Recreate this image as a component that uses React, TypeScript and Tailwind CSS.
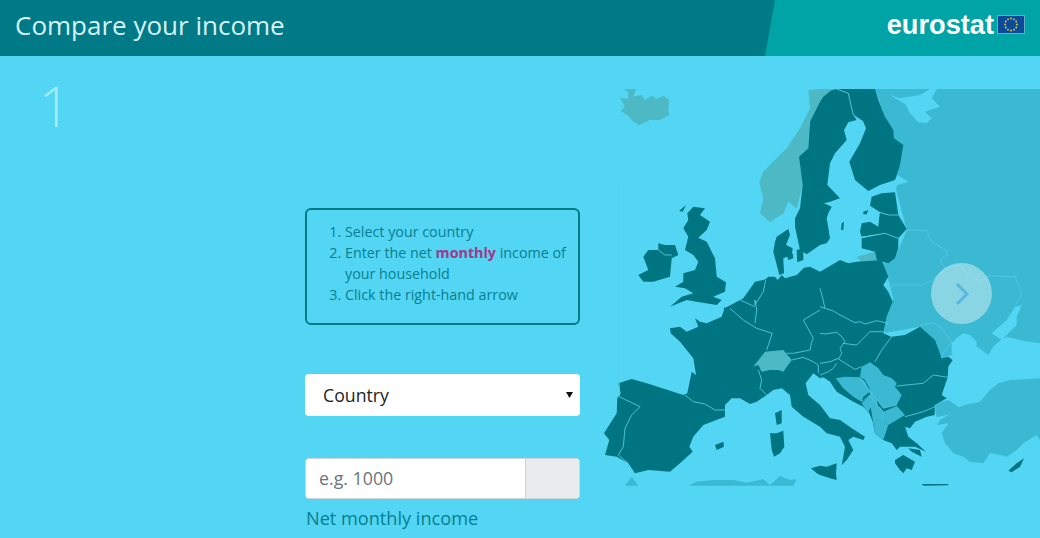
const OFFSETS: Record<string, [number, number]> = {
  a: [600, 85],
  b: [820, 85],
  c: [600, 300],
  d: [820, 300],
};

// Points are noted per map quadrant, at three times the page scale.
function pts(spec: string) {
  let off: [number, number] = OFFSETS.a;
  const out: string[] = [];
  for (const tok of spec.trim().split(/\s+/)) {
    if (OFFSETS[tok]) {
      off = OFFSETS[tok];
      continue;
    }
    const [x, y] = tok.split(",").map(Number);
    out.push(`${(x / 3 + off[0]).toFixed(1)},${(y / 3 + off[1]).toFixed(1)}`);
  }
  return out.join(" ");
}

const BG = "#53d5f4";
const DARK = "#007582";
const EAST = "#3bb9d3";
const EFTA = "#4cb9c4";
const LINE = "#5fd0ea";

const east = [
  "b 165,12 690,12 690,675 d 660,130 610,122 560,110 535,125 520,140 505,165 485,150 470,140 470,125 450,105 430,100 410,115 395,130 395,165 365,175 300,80 190,100 200,50 220,0 b 205,580 190,535 225,520 260,435 225,300 222,160 195,95",
  "d 660,235 620,238 570,240 535,250 510,270 480,305 445,312 420,320 385,345 360,360 352,375 385,370 365,400 375,430 400,460 430,470 450,485 490,490 510,460 540,465 560,470 590,450 610,430 650,405 660,420 680,440 680,235",
  "d 345,315 365,305 385,300 415,320 445,325 400,340 350,352 345,330",
  "c 75,557 95,530 115,557",
  "c 265,557 290,545 340,540 400,540 440,548 490,538 510,555 540,528 570,540 590,538 580,557",
];

const seas = [
  "b 210,30 240,40 300,30 330,12 350,12 335,40 360,65 330,75 315,80 335,100 320,115 295,112 270,85 258,60 235,45",
  "b 145,318 180,300 225,285 232,270 265,290 232,300 225,322 185,325 155,335",
  "d 515,100 560,60 585,20 605,15 590,50 590,75 545,120",
];

const efta = [
  "a 70,12 108,13 100,35 125,30 135,45 155,32 170,42 190,32 208,45 205,75 208,90 180,105 150,105 118,120 100,110 85,92 62,78 75,65 60,38 85,42 85,22",
  "a 625,15 660,12 695,12 695,40 660,50 628,115 625,190 597,215 608,300 590,370 565,350 550,385 510,412 480,385 490,340 478,290 490,260 520,230 560,190 600,130 630,70",
  "c 460,200 495,155 550,150 575,180 550,215 535,210 510,210 485,215 475,195",
  "b 110,515 165,500 170,525 125,530",
];

const dark = [
  // Sweden and Finland
  "b -30,110 0,50 10,35 35,15 50,12 85,25 100,90 110,105 85,112 72,135 80,165 45,205 30,235 22,300 60,340 30,350 12,355 35,365 25,385 20,400 30,460 20,475 0,480 -40,508 -60,495 -75,425 -75,400 -60,370 -52,300 -63,215 -35,190",
  "b 50,12 165,12 175,45 195,95 220,135 222,160 250,180 240,240 225,285 180,300 145,318 105,285 88,230 120,175 138,130 130,110 100,90 85,25",
  // Baltic states
  "b 155,335 185,325 225,322 235,390 205,390 178,380 150,362",
  "b 120,440 125,415 150,410 175,425 178,395 180,382 205,390 235,390 260,432 235,460 195,445 125,455",
  "b 125,460 195,445 235,460 235,490 225,520 205,535 170,525 165,500 125,490",
  "b 130,380 145,375 140,388 130,388",
  "b 65,415 72,410 70,435 63,435",
  // Mainland
  "a 368,672 392,660 430,640 465,590 497,583 505,575 525,575 533,585 545,570 555,580 590,570 612,548 630,545 660,560 b 0,560 35,540 60,525 85,535 110,530 185,525 205,575 190,600 205,620 220,655 d 220,0 200,50 190,100 215,110 255,105 300,80 345,120 365,175 385,170 398,180 385,200 383,232 365,285 380,295 345,315 345,345 320,350 285,365 270,385 255,380 265,410 290,430 318,455 285,440 270,440 240,440 230,450 215,430 190,420 165,400 158,365 148,340 130,320 100,305 50,275 30,245 10,232 0,235 c 640,220 617,250 625,285 660,315 d 30,355 60,360 95,385 135,410 130,420 100,410 85,420 100,450 80,480 65,495 70,470 75,440 60,410 20,400 0,380 c 610,350 575,320 570,285 545,265 520,270 500,285 470,305 450,312 420,295 395,295 375,315 375,350 310,375 280,410 268,440 278,455 240,490 210,515 145,510 105,520 85,490 50,470 15,465 28,420 12,400 50,340 52,295 62,280 55,250 95,237 140,250 250,285 262,280 275,215 288,225 280,175 240,125 212,100 210,85 240,80 260,95 295,80 285,55 300,65 320,70 365,50 375,20",
  // Denmark
  "a 525,470 530,455 565,432 570,450 558,480 578,490 575,510 550,520 552,565 538,570 520,500",
  "a 560,510 578,505 580,520 565,525",
  "a 590,495 610,490 610,525 592,532",
  // UK and Ireland
  "a 280,365 315,370 300,390 330,410 320,435 295,458 320,470 345,520 350,575 378,592 375,620 340,635 365,645 350,660 290,650 260,645 210,665 245,635 280,625 255,610 225,605 250,590 250,565 285,555 295,530 280,510 255,495 265,455 250,430 265,405 262,385",
  "a 145,495 175,495 175,475 195,480 225,480 235,510 215,520 210,575 160,590 130,590 115,570 145,555 130,515",
  "a 237,378 258,360 248,380",
  // Islands
  "c 525,340 545,330 545,370 530,375",
  "c 510,400 530,400 550,392 553,440 540,460 522,470 515,450",
  "c 345,435 370,425 372,440 350,450",
  "c 633,505 660,497 d 20,500 50,490 48,520 50,540 30,535 0,525 c 650,520",
  "d 225,480 250,465 285,485 275,510 260,505 250,520 240,510 225,490",
  "d 305,552 385,552 385,556 310,557",
  "d 565,512 590,490 612,475 600,500 575,517",
  "d 265,445 300,450 305,470 275,455",
];

const balkans = [
  "d 47,235 75,230 120,232 135,245 150,275 130,290 125,305 100,290 70,265",
  "d 125,200 150,187 175,205 190,225 215,235 230,250 225,260 245,285 230,315 190,325 175,305 150,285 148,265 135,240 120,230",
  "d 125,310 150,285 170,300 175,320 150,325 145,340",
  "d 190,335 230,318 255,345 205,375 190,360",
  "d 152,322 180,320 190,335 190,360 205,375 190,420 165,400 160,370",
];

const euBorders = [
  "b 50,12 85,25 100,90 130,110",
  "a 58,290 c 58,290 120,320 95,345 75,385 70,440 55,465 85,490",
  "c 255,285 280,305 315,312 345,330 375,330",
  "c 390,25 430,60 470,85 517,100 500,150",
  "c 475,210 485,240 480,265 500,285",
  "c 575,180 610,172 640,185 655,195 655,220",
  "c 560,160 580,160 630,150 635,125 640,115 610,60 660,30",
  "a 497,585 490,620 465,660 c 465,0 470,30 465,70",
  "a 420,645 465,665",
  "a 175,495 195,510 215,510",
  "d 0,20 40,33 60,45 105,68 120,65 135,72 170,62 205,70",
  "d 0,100 15,102 50,97 65,110 75,125 60,145 65,160 55,178",
  "d 68,130 110,135 130,115 150,95 190,95 215,110 185,150 165,185",
  "d 0,190 30,185 55,175 60,180 105,208 125,200",
  "d 0,225 25,215 40,205 50,190",
  "d 230,258 310,250 340,225 383,232",
  "d 255,350 310,335 345,320",
  "b 0,610 8,640 15,670",
  "b 125,457 195,445 235,460",
  "b 178,382 205,390 235,390",
];

const eastBorders = [
  "b 260,435 290,435 320,437 335,470 380,497 382,510 360,525 375,550 420,540 440,565 480,590 510,572 585,575 600,610 605,630 585,660",
  "b 205,620 220,600 300,600 330,590 370,560",
  "d 300,75 340,68 365,85 395,125 365,165 365,175",
  "d 120,232 150,275 175,305 190,325 230,315",
  "d 125,305 150,285 175,320 190,335 190,360",
  "d 345,315 345,350",
];

function MapArt() {
  return (
    <svg className="absolute left-[600px] top-[29px] h-[410px] w-[440px]" viewBox="600 85 440 410" aria-hidden="true">
      {east.map((p, i) => <polygon key={i} points={pts(p)} fill={EAST} />)}
      {seas.map((p, i) => <polygon key={i} points={pts(p)} fill={BG} />)}
      {efta.map((p, i) => <polygon key={i} points={pts(p)} fill={EFTA} />)}
      {dark.map((p, i) => <polygon key={i} points={pts(p)} fill={DARK} />)}
      <polygon points={pts(efta[2])} fill={EFTA} />
      {balkans.map((p, i) => <polygon key={i} points={pts(p)} fill={EAST} />)}
      {euBorders.map((p, i) => <polyline key={i} points={pts(p)} fill="none" stroke={LINE} strokeWidth="0.8" />)}
      {eastBorders.map((p, i) => <polyline key={i} points={pts(p)} fill="none" stroke={LINE} strokeWidth="0.6" />)}
    </svg>
  );
}

function EuFlag() {
  const stars = Array.from({ length: 12 }, (_, i) => {
    const t = (i * Math.PI) / 6;
    return { x: 14 + 6 * Math.cos(t), y: 9.5 + 6 * Math.sin(t) };
  });
  return (
    <svg className="ml-[3px] h-[19px] w-[28px]" viewBox="0 0 28 19" aria-hidden="true">
      <rect x="0.5" y="0.5" width="27" height="18" fill="#0b4a99" stroke="#5fb0c6" />
      {stars.map((s, i) => <circle key={i} cx={s.x} cy={s.y} r="0.9" fill="#f2d21c" />)}
    </svg>
  );
}

export default function App() {
  return (
    <div className="h-[538px] w-[1040px] overflow-hidden bg-[#53d5f4] font-['Open_Sans',sans-serif]">
      <header className="relative flex h-[56px] items-center justify-between bg-[#007a87] pb-[6px] pl-[15px] pr-[15px]">
        <div className="absolute inset-y-0 left-[765px] right-0 bg-[#00a3a6] [clip-path:polygon(10px_0,100%_0,100%_100%,0_100%)]" />
        <h1 className="relative text-[26px] leading-none text-[#d8f1f3]">Compare your income</h1>
        <div className="relative flex items-center">
          <span className="font-['Liberation_Sans',sans-serif] text-[27.2px] font-bold leading-none text-white">eurostat</span>
          <EuFlag />
        </div>
      </header>

      <main className="relative flex h-[482px]">
        <MapArt />
        <div className="w-[305px] pl-[39px] pt-[11px] text-[56px] font-light leading-[76px] text-[#a6e9f9]">1</div>
        <div className="relative w-[275px] pt-[152px]">
          <div className="h-[117px] rounded-[6px] border-2 border-[#007a87] pt-[11px]">
            <ol className="list-decimal pl-[38px] pr-[8px] text-[14.3px] leading-[21px] text-[#077f90]">
              <li>Select your country</li>
              <li>Enter the net <b className="font-bold text-[#a3358a]">monthly</b> income of your household</li>
              <li>Click the right-hand arrow</li>
            </ol>
          </div>
          <div className="mt-[49px] flex h-[42px] items-center justify-between rounded-[4px] bg-white pl-[18px] pr-[7px] text-[17.7px] text-[#212529]">
            <span>Country</span>
            <svg className="h-[6px] w-[7px]" viewBox="0 0 7 6" aria-hidden="true"><polygon points="0,0 7,0 3.5,6" fill="#111" /></svg>
          </div>
          <div className="mt-[42px] flex h-[41px] overflow-hidden rounded-[4px] border border-[#ced4da] bg-white">
            <input placeholder="e.g. 1000" className="w-[219px] bg-white pl-[13px] text-[17.8px] text-[#495057] outline-none placeholder:text-[#6c757d]" />
            <div className="flex-1 border-l border-[#ced4da] bg-[#e9ecef]" />
          </div>
          <p className="mt-[7px] pl-px text-[18.15px] leading-[25px] text-[#077f90]">Net monthly income</p>
        </div>
        <div className="absolute left-[931px] top-[207px] flex h-[61px] w-[61px] items-center justify-center rounded-full bg-white/40">
          <svg className="h-[26px] w-[18px]" viewBox="0 0 18 26" aria-hidden="true">
            <polyline points="4,3 14,13 4,23" fill="none" stroke="#5ab8e0" strokeWidth="3" />
          </svg>
        </div>
      </main>
    </div>
  );
}
